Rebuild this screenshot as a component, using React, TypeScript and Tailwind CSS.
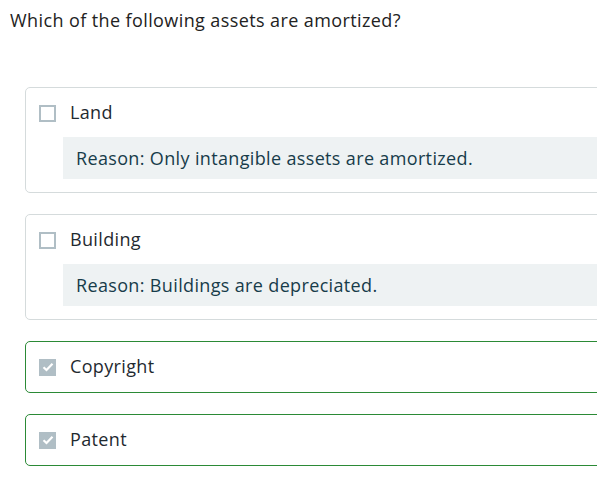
const items = [
  { label: "Land", checked: false, reason: "Reason: Only intangible assets are amortized." },
  { label: "Building", checked: false, reason: "Reason: Buildings are depreciated." },
  { label: "Copyright", checked: true },
  { label: "Patent", checked: true },
];

function Box({ checked }: { checked: boolean }) {
  if (checked) {
    return (
      <span className="flex h-[17px] w-[17px] shrink-0 items-center justify-center bg-[#b0bec5]">
        <svg width="12" height="10" viewBox="0 0 12 10" fill="none">
          <path d="M1.5 5.2 4.5 8 10.5 1.8" stroke="#fff" strokeWidth="2.2" />
        </svg>
      </span>
    );
  }
  return <span className="h-[17px] w-[17px] shrink-0 border-2 border-[#b0bec5] bg-white" />;
}

export default function App() {
  return (
    <div
      className="h-[478px] w-[597px] overflow-hidden bg-white tracking-[0.35px] text-[#1f2a30]"
      style={{ fontFamily: "'Open Sans', sans-serif" }}
    >
      <h1 className="pl-[10px] pt-[9px] text-[18px] leading-[22px] tracking-[0.4px] text-[#222]">
        Which of the following assets are amortized?
      </h1>
      <div className="ml-[25px] mt-[56px] flex w-[620px] flex-col gap-[21px]">
        {items.map((it) => (
          <div
            key={it.label}
            className={
              it.checked
                ? "rounded-[5px] border border-[#2b8a36] px-[13px] py-[13px]"
                : "rounded-[5px] border border-[#d5dbdc] px-[13px] pb-[13px] pt-[13px]"
            }
          >
            <div className="flex h-[24px] items-center gap-[14px]">
              <Box checked={it.checked} />
              <span className="-mt-[1px] text-[18px]">{it.label}</span>
            </div>
            {it.reason && (
              <div className="ml-[24px] mt-[12px] flex h-[42px] items-center bg-[#eef2f3] px-[13px] text-[18px] text-[#173c4a]">
                {it.reason}
              </div>
            )}
          </div>
        ))}
      </div>
    </div>
  );
}
